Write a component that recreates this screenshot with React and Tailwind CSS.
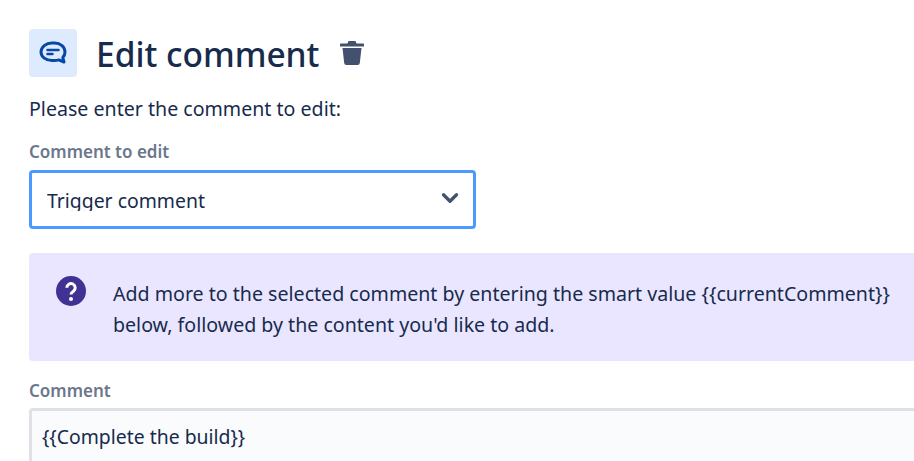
import { ChevronDown } from 'lucide-react';

export default function App() {
  return (
    <div className="h-[461px] w-[914px] overflow-hidden bg-white pl-[29px] pt-[29px] font-['Noto_Sans',sans-serif] text-[#172b4d]">
      {/* Header */}
      <header className="flex items-center">
        <div className="flex h-12 w-12 items-center justify-center rounded bg-[#deebff]">
          <svg width="28" height="24" viewBox="0 0 28 24" fill="none">
            <path d="M13 2h2.500c6 0 10.500 3.800 10.500 9 0 2.200-.8 4.100-2.200 5.600l1.200 4.400-5.300-2.100c-1.300.4-2.700.6-4.200.6H13C7 19.500 2 16 2 11s5-9 11-9z" stroke="#0747a6" strokeWidth="3" strokeLinejoin="round" />
            <path d="M8.500 9h11M8.500 13h5" stroke="#0747a6" strokeWidth="2.500" strokeLinecap="round" />
          </svg>
        </div>
        <h1 className="ml-[19px] mt-[3px] text-[33.5px] font-medium leading-none">Edit comment</h1>
        <svg className="ml-[21px] mb-[1px]" width="24" height="24" viewBox="0 0 24 24" fill="#42526e">
          <path d="M8.500 0h7l1 2.500H23a1 1 0 0 1 0 3H1a1 1 0 0 1 0-3h6.500z" />
          <path d="M2.500 7h19l-1.700 15a2.200 2.200 0 0 1-2.200 2H6.400a2.200 2.200 0 0 1-2.200-2z" />
        </svg>
      </header>
      <p className="mt-[18px] text-[19.6px] leading-7">Please enter the comment to edit:</p>
      <label className="mt-[19px] block text-[17px] font-semibold leading-5 text-[#6b778c]">Comment to edit</label>
      <div className="mt-[8px] flex h-[59px] w-[447px] items-center justify-between rounded border-[3px] border-[#4c9aff] pl-[15px] pr-[10px]">
        <span className="h-[23px] overflow-hidden text-[19.4px] leading-[25px]">Trigger comment</span>
        <ChevronDown className="mb-[3px]" size={26} strokeWidth={3} color="#42526e" />
      </div>
      <div className="mt-[24px] flex h-[108px] rounded-l bg-[#eae6ff] pl-[27px] pt-[23px]">
        <svg width="30" height="30" viewBox="0 0 30 30" className="shrink-0">
          <circle cx="15" cy="15" r="15" fill="#403294" />
          <path d="M10.800 11.800a4.200 4.200 0 1 1 6.600 3.400c-1.500 1-2.400 1.700-2.400 3.200" fill="none" stroke="#fff" strokeWidth="3" />
          <circle cx="15" cy="23" r="2" fill="#fff" />
        </svg>
        <p className="ml-[27px] mt-[2px] text-[19.6px] leading-[31px]">
          Add more to the selected comment by entering the smart value {'{{currentComment}}'}
          <br />
          below, followed by the content you'd like to add.
        </p>
      </div>
      <label className="mt-[20px] block text-[17px] font-semibold leading-5 text-[#6b778c]">Comment</label>
      <div className="mt-[7px] h-[60px] w-[900px] rounded-tl border-[3px] border-[#dfe1e6] bg-[#fafbfc] pl-[10px] pt-[14px] text-[19.4px] leading-6">
        {'{{Complete the build}}'}
      </div>
    </div>
  );
}
